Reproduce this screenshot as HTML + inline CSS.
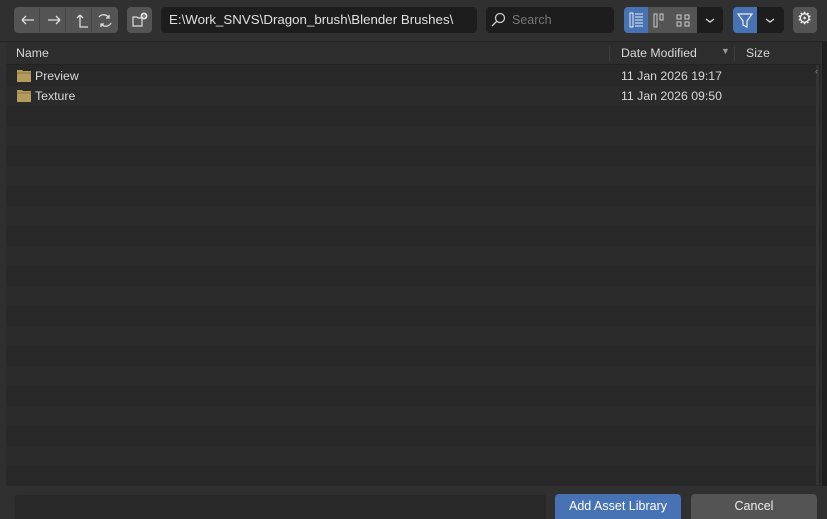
<!DOCTYPE html><html style="width:827px;height:519px;overflow:hidden"><head><style>
body{margin:0;width:827px;height:519px;background:#303030;font-family:"Liberation Sans",sans-serif;font-size:12.3px;color:#d8d8d8;position:relative;overflow:hidden}
.a{position:absolute}
.btn{background:#545454;border-radius:4px}
.list{left:6px;top:42px;width:815px;height:444px;background:repeating-linear-gradient(#282828 0 20px,#2b2b2b 20px 40px);background-position:0 24px}
svg{position:absolute}
</style></head><body>
<div class="a" style="left:0;top:0;width:827px;height:41px;background:#303030;border-bottom:1px solid #232323"></div>
<div class="a btn" style="left:14px;top:7px;width:104px;height:26px;background:#545454"></div>
<div class="a" style="left:39px;top:8px;width:1px;height:24px;background:#444"></div>
<div class="a" style="left:65px;top:8px;width:1px;height:24px;background:#444"></div>
<div class="a" style="left:91px;top:8px;width:1px;height:24px;background:#444"></div>
<svg style="left:14px;top:7px" width="104" height="26" fill="none" stroke="#ddd" stroke-width="1.3">
<path d="M8 13h12M8 13l4-4M8 13l4 4"/><path d="M34 13h12M46 13l-4-4M46 13l-4 4"/>
<path d="M66 8v12h8M66 8l-3 3M66 8l3 3"/><path d="M85 10a6 6 0 0 1 10 1M97 16a6 6 0 0 1-10 1M95 8v3h-3M87 20v-3h3"/></svg>
<div class="a btn" style="left:127px;top:7px;width:25px;height:26px"></div>
<svg style="left:127px;top:7px" width="25" height="26"><path d="M6 10h4l1 1h4v8H6z" fill="none" stroke="#ddd" stroke-width="1.2"/><circle cx="17" cy="9" r="3.5" fill="#ddd"/><path d="M17 7v4M15 9h4" stroke="#545454"/></svg>
<div class="a" style="left:161px;top:7px;width:316px;height:26px;background:#1d1d1d;border-radius:4px"></div>
<div class="a" style="left:169px;top:12px;color:#e0e0e0;font-size:13.3px">E:\Work_SNVS\Dragon_brush\Blender Brushes\</div>
<div class="a" style="left:486px;top:7px;width:128px;height:26px;background:#1d1d1d;border-radius:4px"></div>
<svg style="left:490px;top:11px" width="18" height="18" fill="none" stroke="#ccc" stroke-width="1.3"><circle cx="10" cy="7" r="4.5"/><path d="M7 10l-5 5"/></svg>
<div class="a" style="left:512px;top:13px;color:#777;font-size:12.5px">Search</div>
<div class="a" style="left:624px;top:7px;width:99px;height:26px;background:#1d1d1d;border-radius:4px"></div>
<div class="a" style="left:624px;top:7px;width:24px;height:26px;background:#4772b3;border-radius:4px 0 0 4px"></div>
<div class="a" style="left:648px;top:7px;width:49px;height:26px;background:#545454"></div>
<svg style="left:624px;top:7px" width="99" height="26" fill="none" stroke="#eee" stroke-width="1"><path d="M6 6h3v14H6zM11 7h8M11 10h8M11 13h8M11 16h8M11 19h8" /><path d="M30 7h3v13h-3zM36 7h3v6h-3z" stroke="#ccc"/><path d="M53 8h4v4h-4zM61 8h4v4h-4zM53 15h4v4h-4zM61 15h4v4h-4z" stroke="#ccc"/><path d="M82 12l4 3 4-3" stroke="#ddd" stroke-width="1.3"/></svg>
<div class="a" style="left:733px;top:7px;width:51px;height:26px;background:#1d1d1d;border-radius:4px"></div>
<div class="a" style="left:733px;top:7px;width:24px;height:26px;background:#4772b3;border-radius:4px 0 0 4px"></div>
<svg style="left:733px;top:7px" width="51" height="26" fill="none" stroke="#eee" stroke-width="1.2"><path d="M5 7h14l-5 7v6l-4-2v-4z"/><path d="M33 12l4 3 4-3" stroke="#ddd" stroke-width="1.3"/></svg>
<div class="a btn" style="left:793px;top:7px;width:24px;height:26px"></div>
<div class="a" style="left:797px;top:9px;font-size:17px;color:#eee">⚙</div>
<div class="a list"></div>
<div class="a" style="left:6px;top:42px;width:815px;height:22px;background:#2d2d2d;border-bottom:1px solid #232323"></div>
<div class="a" style="left:16px;top:46px">Name</div>
<div class="a" style="left:609px;top:46px;width:1px;height:15px;background:#3c3c3c"></div>
<div class="a" style="left:621px;top:46px">Date Modified</div>
<div class="a" style="left:721px;top:46px;font-size:9px;color:#999">▼</div>
<div class="a" style="left:734px;top:46px;width:1px;height:15px;background:#3c3c3c"></div>
<div class="a" style="left:746px;top:46px">Size</div>
<div class="a" style="left:816px;top:65px;width:3px;height:420px;background:#333"></div>
<div class="a" style="left:815px;top:66px;font-size:9px;color:#888">‹</div>
<div class="a" style="left:822px;top:42px;width:5px;height:444px;background:#1e1e1e"></div>
<svg style="left:17px;top:69px" width="15" height="34"><path d="M0 1h5l1 1h8v11H0z M0 21h5l1 1h8v11H0z" fill="#b39b5c"/><path d="M0 4h14M0 24h14" stroke="#8f7a45"/></svg>
<div class="a" style="left:35px;top:69px">Preview</div>
<div class="a" style="left:621px;top:69px">11 Jan 2026 19:17</div>
<div class="a" style="left:35px;top:89px">Texture</div>
<div class="a" style="left:621px;top:89px">11 Jan 2026 09:50</div>
<div class="a" style="left:14px;top:494px;width:531px;height:30px;background:#282828;border-radius:4px;border:1px solid #2e2e2e"></div>
<div class="a" style="left:555px;top:494px;width:126px;height:30px;background:#4772b3;border-radius:4px"></div>
<div class="a" style="left:555px;top:499px;width:126px;text-align:center;font-size:12.5px;color:#fff">Add Asset Library</div>
<div class="a" style="left:691px;top:494px;width:126px;height:30px;background:#545454;border-radius:4px"></div>
<div class="a" style="left:691px;top:499px;width:126px;text-align:center;font-size:12.5px;color:#eee">Cancel</div>
</body></html>
